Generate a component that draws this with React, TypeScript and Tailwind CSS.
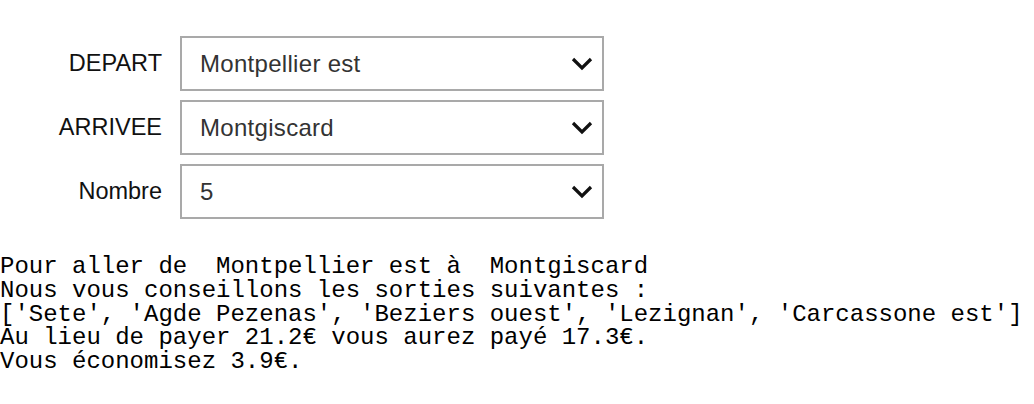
import { useState } from 'react';

const stations = ['Montpellier est', 'Montgiscard', 'Sete', 'Agde Pezenas', 'Beziers ouest', 'Lezignan', 'Carcassone est'];

function Chevron() {
    return (
        <svg width="22" height="14" viewBox="0 0 22 14" className="pointer-events-none absolute right-[11px] top-1/2 -translate-y-1/2">
            <polyline points="2,2 11,11 20,2" fill="none" stroke="#111" strokeWidth="3.2" />
        </svg>
    );
}

function Field({ label, value, options, onChange }: { label: string; value: string; options: string[]; onChange: (v: string) => void }) {
    return (
        <>
            <label className="self-center text-right text-[23.5px] leading-none text-[#111]">{label}</label>
            <div className="relative">
                <select
                    value={value}
                    onChange={(e) => onChange(e.target.value)}
                    className="h-[55px] w-full appearance-none rounded-none border-2 border-[#a9a9a9] bg-white pl-[18px] text-[24px] tracking-[0.3px] text-[#333] outline-none"
                    style={{ fontFamily: '"Liberation Sans", Arial, sans-serif' }}
                >
                    {options.map((o) => (
                        <option key={o} value={o}>{o}</option>
                    ))}
                </select>
                <Chevron />
            </div>
        </>
    );
}

export default function App() {
    const [depart, setDepart] = useState('Montpellier est');
    const [arrivee, setArrivee] = useState('Montgiscard');
    const [nombre, setNombre] = useState('5');

    return (
        <div className="min-h-screen bg-white pt-[36px]" style={{ fontFamily: '"Liberation Sans", Arial, sans-serif' }}>
            {/* Formulaire */}
            <div className="grid grid-cols-[162px_424px] gap-x-[18px] gap-y-[9px]">
                <Field label="DEPART" value={depart} options={stations} onChange={setDepart} />
                <Field label="ARRIVEE" value={arrivee} options={stations} onChange={setArrivee} />
                <Field label="Nombre" value={nombre} options={['1', '2', '3', '4', '5', '6']} onChange={setNombre} />
            </div>

            {/* Resultat */}
            <pre
                className="mt-[36px] text-[24px] leading-[23.75px] text-black"
                style={{ fontFamily: '"Liberation Mono", "Courier New", monospace' }}
            >
{`Pour aller de  Montpellier est à  Montgiscard
Nous vous conseillons les sorties suivantes :
['Sete', 'Agde Pezenas', 'Beziers ouest', 'Lezignan', 'Carcassone est']
Au lieu de payer 21.2€ vous aurez payé 17.3€.
Vous économisez 3.9€.`}
            </pre>
        </div>
    );
}
